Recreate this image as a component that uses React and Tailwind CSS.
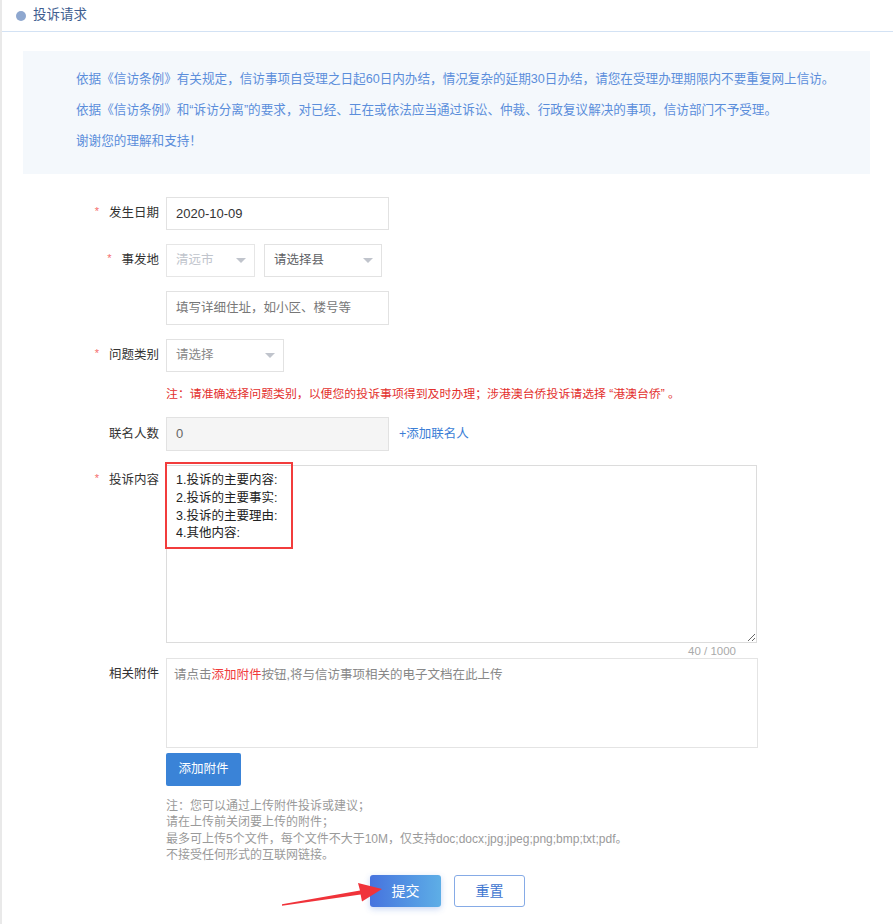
import React from 'react';

const Caret = () => (
  <svg width="10" height="6" viewBox="0 0 10 6" className="shrink-0">
    <path d="M0 0 L10 0 L5 5 Z" fill="#c0c4cc" />
  </svg>
);

const Label = ({ children, required, tall }) => (
  <div
    className={`w-[164px] shrink-0 pr-[7px] flex justify-end items-center text-[12.5px] text-[#333] ${
      tall ? 'h-[30px]' : 'h-[33px]'
    }`}
  >
    {required && <span className="text-[#f56c6c] text-[11px] mr-[10px] -mt-[4px]">*</span>}
    <span>{children}</span>
  </div>
);

const App = () => {
  return (
    <div className="relative w-[893px] h-[924px] bg-white border-l-2 border-[#e9e9e9] overflow-hidden font-['Liberation_Sans','Noto_Sans_CJK_SC',sans-serif]">
      {/* header */}
      <div className="h-[32px] border-b border-[#d3e2f4] flex items-center pl-[14px]">
        <span className="w-[10px] h-[10px] rounded-full bg-[#8ea7cf]" />
        <span className="ml-[7px] text-[13.5px] text-[#3f5d8f]">投诉请求</span>
      </div>

      {/* notice */}
      <div className="ml-[21px] mr-[23px] mt-[19px] h-[123px] bg-[#f4f8fc] pl-[53px] pt-[13px] text-[12.6px] leading-[31px] text-[#5b8edb]">
        <p>依据《信访条例》有关规定，信访事项自受理之日起60日内办结，情况复杂的延期30日办结，请您在受理办理期限内不要重复网上信访。</p>
        <p>依据《信访条例》和“诉访分离”的要求，对已经、正在或依法应当通过诉讼、仲裁、行政复议解决的事项，信访部门不予受理。</p>
        <p>谢谢您的理解和支持！</p>
      </div>

      {/* form */}
      <div className="mt-[23px]">
        <div className="flex">
          <Label required>发生日期</Label>
          <div className="w-[223px] h-[33px] border border-[#e2e2e2] flex items-center pl-[9px] text-[13px] text-[#333]">
            2020-10-09
          </div>
        </div>

        <div className="flex mt-[14px]">
          <Label required>事发地</Label>
          <div className="flex gap-[9px]">
            <div className="w-[89px] h-[33px] border border-[#e6e6e6] flex items-center justify-between pl-[9px] pr-[8px] text-[12.5px] text-[#c0c4cc]">
              清远市
              <Caret />
            </div>
            <div className="w-[118px] h-[33px] border border-[#e2e2e2] flex items-center justify-between pl-[9px] pr-[8px] text-[12.5px] text-[#606266]">
              请选择县
              <Caret />
            </div>
          </div>
        </div>

        <div className="flex mt-[14px]">
          <div className="w-[164px] shrink-0" />
          <div className="w-[223px] h-[34px] border border-[#e2e2e2] flex items-center pl-[9px] text-[12.5px] text-[#777]">
            填写详细住址，如小区、楼号等
          </div>
        </div>

        <div className="flex mt-[14px]">
          <Label required>问题类别</Label>
          <div className="w-[118px] h-[33px] border border-[#e2e2e2] flex items-center justify-between pl-[9px] pr-[8px] text-[12.5px] text-[#888]">
            请选择
            <Caret />
          </div>
        </div>

        <div className="pl-[164px] mt-[14px] text-[11.9px] leading-[16px] text-[#e3302d]">
          注：请准确选择问题类别，以便您的投诉事项得到及时办理；涉港澳台侨投诉请选择 “港澳台侨” 。
        </div>

        <div className="flex items-center mt-[15px]">
          <Label>联名人数</Label>
          <div className="w-[223px] h-[34px] border border-[#e2e2e2] bg-[#f5f5f5] flex items-center pl-[9px] text-[13px] text-[#666]">
            0
          </div>
          <span className="ml-[10px] text-[12.5px] text-[#3b7ed6]">+添加联名人</span>
        </div>

        <div className="flex mt-[14px]">
          <Label required tall>投诉内容</Label>
          <div>
            <div className="relative">
              <textarea
                readOnly
                value={'1.投诉的主要内容:\n2.投诉的主要事实:\n3.投诉的主要理由:\n4.其他内容:'}
                className="block w-[591px] h-[178px] border border-[#dcdcdc] pl-[9px] pt-[6px] text-[12.5px] leading-[17.8px] text-[#222] outline-none"
              />
              <div className="absolute -left-[1px] -top-[3px] w-[128px] h-[87px] border-2 border-[#f23c3c] pointer-events-none" />
            </div>
            <div className="w-[570px] text-right text-[11.5px] leading-[14px] text-[#aaa] mt-[1px]">40 / 1000</div>
          </div>
        </div>

        <div className="flex">
          <Label>相关附件</Label>
          <div>
            <div className="w-[592px] h-[90px] border border-[#e4e4e4] pl-[7px] pt-[7px] text-[12.5px] text-[#888]">
              请点击<span className="text-[#f03a3a]">添加附件</span>按钮,将与信访事项相关的电子文档在此上传
            </div>
            <button className="mt-[5px] w-[75px] h-[33px] rounded-[2px] bg-[#3a83d7] text-white text-[12.5px]">
              添加附件
            </button>
            <div className="mt-[12px] text-[12px] leading-[16.3px] text-[#9a9a9a]">
              <p>注：您可以通过上传附件投诉或建议；</p>
              <p>请在上传前关闭要上传的附件；</p>
              <p>最多可上传5个文件，每个文件不大于10M，仅支持doc;docx;jpg;jpeg;png;bmp;txt;pdf。</p>
              <p>不接受任何形式的互联网链接。</p>
            </div>
          </div>
        </div>

        <div className="flex justify-center gap-[13px] mt-[12px]">
          <button className="w-[71px] h-[32px] rounded-[3px] bg-linear-to-r from-[#4773de] to-[#5eaee6] text-white text-[14px] shadow-[0_2px_6px_rgba(70,120,220,0.3)]">
            提交
          </button>
          <button className="w-[71px] h-[32px] rounded-[3px] border border-[#86abe6] bg-white text-[#3f76d0] text-[14px]">
            重置
          </button>
        </div>
      </div>

      {/* annotation arrow */}
      <svg className="absolute left-0 top-0 pointer-events-none" width="893" height="924" viewBox="2 0 893 924">
        <polygon
          points="282,904.3 360,890.4 358,883 382,889 362,901.6 360.6,894.4 282,905.8"
          fill="#f0333a"
        />
      </svg>
    </div>
  );
};

export default App;
